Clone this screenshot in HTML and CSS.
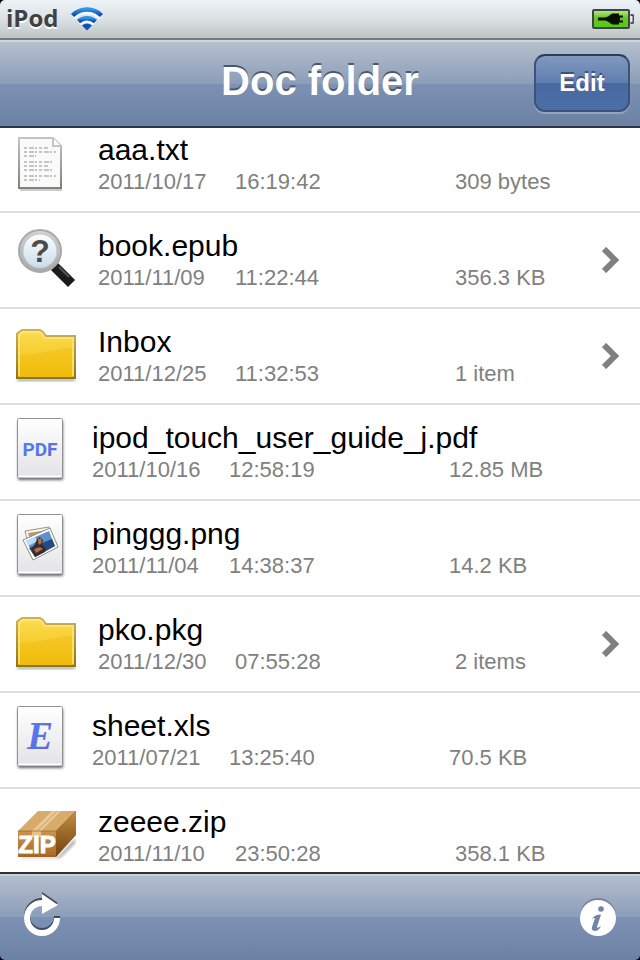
FILE: index.html
```html
<!DOCTYPE html>
<html lang="en">
<head>
<meta charset="utf-8">
<meta name="viewport" content="width=device-width">
<title>Doc folder</title>
<link rel="stylesheet" href="styles.css">
</head>
<body>
<svg class="defs" aria-hidden="true">
  <defs>
    <linearGradient id="paper" x2="0" y2="1"><stop offset="0" stop-color="#fff"/><stop offset="1" stop-color="#e3e3e5"/></linearGradient>
    <linearGradient id="edge" x2="0" y2="1"><stop offset="0" stop-color="#c4c4c2"/><stop offset="1" stop-color="#81807c"/></linearGradient>
    <linearGradient id="gold" x2="0" y2="1"><stop offset="0" stop-color="#fbdc52"/><stop offset="1" stop-color="#f2be0c"/></linearGradient>
    <linearGradient id="goldedge" x2="0" y2="1"><stop offset="0" stop-color="#cdb057"/><stop offset="1" stop-color="#8e761d"/></linearGradient>
    <linearGradient id="ink" x2="1" y2="1"><stop offset="0" stop-color="#4c86f4"/><stop offset="1" stop-color="#6462dc"/></linearGradient>
    <linearGradient id="rim" x2="0" y2="1"><stop offset="0" stop-color="#d2d2d2"/><stop offset="1" stop-color="#aaa9a9"/></linearGradient>
    <linearGradient id="lens" x2="0" y2="1"><stop offset="0" stop-color="#fdfeff"/><stop offset="1" stop-color="#c9dcec"/></linearGradient>
    <linearGradient id="boxfront" x2="0" y2="1"><stop offset="0" stop-color="#cb944e"/><stop offset="1" stop-color="#a96b25"/></linearGradient>
    <linearGradient id="boxside" x2="0" y2="1"><stop offset="0" stop-color="#c38d43"/><stop offset="1" stop-color="#71420f"/></linearGradient>
    <linearGradient id="wave" x2="0" y2="1"><stop offset="0" stop-color="#2d92e8"/><stop offset="1" stop-color="#1146b4"/></linearGradient>
    <linearGradient id="cell" x2="0" y2="1"><stop offset="0" stop-color="#b8ee83"/><stop offset=".45" stop-color="#64c524"/><stop offset="1" stop-color="#55ca14"/></linearGradient>
    <filter id="soft" x="-20%" y="-20%" width="140%" height="140%"><feGaussianBlur stdDeviation="1.6"/></filter>
    <symbol id="page" viewBox="0 0 64 72">
      <rect x="4" y="5" width="45" height="59" rx="1" fill="#000" opacity=".6" filter="url(#soft)"/>
      <rect x="3.500" y="2.500" width="45" height="59" rx="1" fill="url(#paper)" stroke="#929292"/>
      <path d="M4.500 60.500h43" stroke="#fff" stroke-width="2"/>
    </symbol>
    <symbol id="folder" viewBox="0 0 64 72">
      <path d="M3 59h58v2H3z" fill="#000" opacity=".45" filter="url(#soft)"/>
      <path d="M3 58V14l2-2 3-2h18l3 2 3 4h29v42z" fill="url(#gold)" stroke="url(#goldedge)" stroke-width="2"/>
      <path d="M4 57V34c15 3 32-4 56-7v30z" fill="#edb400" opacity=".3"/>
      <path d="M5 56V15l4-3h16l3 2 3 4h28v38" fill="none" stroke="#ffe980" stroke-width="2" opacity=".7"/>
    </symbol>
  </defs>
</svg>

<header class="status">
  <span class="device">iPod</span>
  <svg class="wifi" viewBox="0 0 34 26" role="img" aria-label="Wi-Fi">
    <g fill="none" stroke="#fff" opacity=".8" transform="translate(0 1)"><path d="M3 10a20 20 0 0 1 28 0M9 16a12 12 0 0 1 16 0" stroke-width="6"/></g>
    <g fill="none" stroke="url(#wave)" stroke-width="4.500"><path d="M2.500 9.500a20.500 20.500 0 0 1 29 0"/><path d="M8.500 15.500a12.500 12.500 0 0 1 17 0"/></g>
    <path d="M17 24.500l-5-5q5-4 10 0z" fill="#1151bd"/>
  </svg>
  <svg class="battery" viewBox="0 0 42 21" role="img" aria-label="Battery charging">
    <path d="M38.500 6h1.500q1.500 0 1.500 1.500v5q0 1.500-1.500 1.500h-1.500" fill="#e4e9ea" stroke="#4b5158" stroke-width="2"/>
    <rect x="1" y="1" width="36" height="18" rx="1" fill="url(#cell)" stroke="#3e4549" stroke-width="2"/>
    <path d="M6 8.500h7l3-1 4-3h7v2h4v2h-3v3h3v2h-4v2h-7l-4-3-3-1H6z" fill="#050f03"/>
  </svg>
</header>

<nav class="navbar">
  <h1>Doc folder</h1>
  <button type="button" class="edit">Edit</button>
</nav>

<main class="files">
  <ul>
    <li><a class="row" href="#aaa">
      <svg class="icon" viewBox="0 0 64 72" aria-hidden="true">
        <path d="M6 61h42v2H6z" fill="#ccc"/>
        <path d="M5 10h34l8 8v42H5z" fill="#fafafa" stroke="url(#edge)" stroke-width="2"/>
        <path d="M39 10v8h8" fill="#fff" stroke="#c5c5c5" stroke-width="2"/>
        <path d="M10 20h24M10 24h32M10 28h12M10 34h30M10 38h24M10 42h30M10 48h32M10 52h16" stroke="#c4c4c4" stroke-width="2" stroke-dasharray="3 2 5 1 2 2"/>
      </svg>
      <span class="info"><span class="name">aaa.txt</span><span class="meta"><span class="date">2011/10/17</span><span class="time">16:19:42</span><span class="size">309 bytes</span></span></span>
    </a></li>
    <li><a class="row" href="#book">
      <svg class="icon" viewBox="0 0 64 72" aria-hidden="true">
        <path d="M38 39l6 6" stroke="#aaa" stroke-width="6"/>
        <path d="M44 46l10 10" stroke="#1b1b1b" stroke-width="10" stroke-linecap="square"/>
        <path d="M45 43l10 10" stroke="#555" stroke-width="2"/>
        <circle cx="26" cy="27" r="21" fill="url(#rim)" stroke="#a9a9a9" stroke-width="2"/>
        <circle cx="26" cy="27" r="17" fill="url(#lens)" stroke="#c0c4c8"/>
        <text x="26" y="38" class="question">?</text>
      </svg>
      <span class="info"><span class="name">book.epub</span><span class="meta"><span class="date">2011/11/09</span><span class="time">11:22:44</span><span class="size">356.3 KB</span></span></span>
      <svg class="chevron" viewBox="0 0 18 26" aria-hidden="true"><path d="M2 2l11 11L2 24" /></svg>
    </a></li>
    <li><a class="row" href="#inbox">
      <svg class="icon" aria-hidden="true"><use href="#folder"/></svg>
      <span class="info"><span class="name">Inbox</span><span class="meta"><span class="date">2011/12/25</span><span class="time">11:32:53</span><span class="size">1 item</span></span></span>
      <svg class="chevron" viewBox="0 0 18 26" aria-hidden="true"><path d="M2 2l11 11L2 24" /></svg>
    </a></li>
    <li><a class="row document" href="#guide">
      <svg class="icon" viewBox="0 0 64 72" aria-hidden="true"><use href="#page"/><text x="26" y="40" class="pdf">PDF</text></svg>
      <span class="info"><span class="name">ipod_touch_user_guide_j.pdf</span><span class="meta"><span class="date">2011/10/16</span><span class="time">12:58:19</span><span class="size">12.85 MB</span></span></span>
    </a></li>
    <li><a class="row document" href="#pinggg">
      <svg class="icon" viewBox="0 0 64 72" aria-hidden="true"><use href="#page"/>
        <path d="M11 19l24-4 5 20-24 4z" fill="#faf7ed" stroke="#9b9588"/>
        <path d="M14 21l19-3 3 14-18 3z" fill="#bd9868"/>
        <path d="M9 28l27-12 8 19-25 13z" fill="#fff" stroke="#8a8a8a"/>
        <path d="M12 29l23-10 6 15-20 11z" fill="#5d91cc"/>
        <path d="M15 36l23-9 3 7-20 11z" fill="#244c82"/>
        <path d="M12 29l9-4 3 4-10 5z" fill="#b9dcf5"/>
        <path d="M17 37l4-5 2-5 3-2 3 3-1 4 4 5-1 3-10 5z" fill="#3c2a29"/>
        <path d="M24 27l3-1 1 4-2 3-2-2zM20 37l6-2 3 2-7 4z" fill="#a96d50"/>
      </svg>
      <span class="info"><span class="name">pinggg.png</span><span class="meta"><span class="date">2011/11/04</span><span class="time">14:38:37</span><span class="size">14.2 KB</span></span></span>
    </a></li>
    <li><a class="row" href="#pko">
      <svg class="icon" aria-hidden="true"><use href="#folder"/></svg>
      <span class="info"><span class="name">pko.pkg</span><span class="meta"><span class="date">2011/12/30</span><span class="time">07:55:28</span><span class="size">2 items</span></span></span>
      <svg class="chevron" viewBox="0 0 18 26" aria-hidden="true"><path d="M2 2l11 11L2 24" /></svg>
    </a></li>
    <li><a class="row document" href="#sheet">
      <svg class="icon" viewBox="0 0 64 72" aria-hidden="true"><use href="#page"/><text x="26" y="45" class="letter">E</text></svg>
      <span class="info"><span class="name">sheet.xls</span><span class="meta"><span class="date">2011/07/21</span><span class="time">13:25:40</span><span class="size">70.5 KB</span></span></span>
    </a></li>
    <li><a class="row" href="#zeeee">
      <svg class="icon" viewBox="0 0 64 72" aria-hidden="true">
        <path d="M8 57h36l17-18v4L46 58H8z" fill="#000" opacity=".4" filter="url(#soft)"/>
        <path d="M4 31l20-20h38L42 31z" fill="#d9ab6a"/>
        <path d="M4 31h38v26H4z" fill="url(#boxfront)"/>
        <path d="M42 31l20-20v24L42 57z" fill="url(#boxside)"/>
        <path d="M18 31l20-20h9L27 31v6h-9z" fill="#edd09d" opacity=".8"/>
        <path d="M23 31l20-20" stroke="#c99b5a" stroke-width="1"/>
        <path d="M4 31h38l20-20M4 56h38" fill="none" stroke="#8d5719" opacity=".6"/>
        <text x="23" y="53" class="zip">ZIP</text>
      </svg>
      <span class="info"><span class="name">zeeee.zip</span><span class="meta"><span class="date">2011/11/10</span><span class="time">23:50:28</span><span class="size">358.1 KB</span></span></span>
    </a></li>
  </ul>
</main>

<footer class="toolbar">
  <button type="button" class="tool" aria-label="Refresh">
    <svg viewBox="0 0 40 48" aria-hidden="true">
      <g fill="#3c4a61" transform="translate(0 -2)"><path d="M35 28a15 15 0 1 1-15-15" fill="none" stroke="#3c4a61" stroke-width="6"/><path d="M20 4l16 11-16 9z"/></g>
      <path d="M35 28a15 15 0 1 1-15-15" fill="none" stroke="#fff" stroke-width="6"/><path d="M20 4l16 11-16 9z" fill="#fff"/>
    </svg>
  </button>
  <button type="button" class="tool" aria-label="Information">
    <svg viewBox="0 0 40 48" aria-hidden="true">
      <circle cx="20" cy="26" r="18" fill="#75839c"/>
      <circle cx="20" cy="28" r="18" fill="#fff"/>
      <circle cx="23" cy="19" r="2.800" fill="#7485a3"/>
      <path d="M14 29q3-5 9-4.500l-4 12.500q0 2 4-1-2 5-6.500 5-3.500-.5-2.500-4l3-9q-1-.5-3 1z" fill="#7485a3"/>
    </svg>
  </button>
</footer>
</body>
</html>
```
FILE: styles.css
```css
* { box-sizing: border-box; }

body {
  margin: 0;
  height: 100vh;
  display: flex;
  flex-direction: column;
  background: #000;
  font-family: "Liberation Sans", Arial, sans-serif;
}

svg { display: block; }
.defs { position: absolute; width: 0; height: 0; }
button { font: inherit; cursor: pointer; }

.status {
  flex: none;
  height: 40px;
  padding: 0 6px;
  display: flex;
  align-items: center;
  background: linear-gradient(#edf3f6, #dce2e4 50%, #bdc4c5);
  border-bottom: 2px solid #717a7d;
  border-radius: 5px 5px 0 0;
}
.device {
  padding-bottom: 2px;
  font: 700 24px/36px "Open Sans", sans-serif;
  color: #3f4144;
  text-shadow: 0 2px 0 #fff;
}
.wifi { width: 34px; height: 26px; margin-left: 12px; }
.battery { width: 42px; height: 21px; margin-left: auto; }

.navbar {
  flex: none;
  height: 88px;
  padding: 0 10px 2px;
  display: grid;
  grid-template-columns: 96px 1fr 96px;
  align-items: center;
  background: linear-gradient(#b5c0ce, #8b9db8 50%, #7c91b3 50%, #6c82a4);
  border-top: 2px solid #ced6de;
  border-bottom: 2px solid #2c3645;
}
h1 {
  grid-column: 2;
  margin: 0;
  padding-bottom: 4px;
  text-align: center;
  font-size: 40px;
  line-height: 48px;
  color: #fff;
  text-shadow: 0 -2px 0 #4b586c;
}
.edit {
  height: 58px;
  padding: 0;
  border: 2px solid #3b5379;
  border-top-color: #2c3c57;
  border-radius: 11px;
  background: linear-gradient(#8299c0, #5e7daf 50%, #48699f 50%, #4a6fa8);
  box-shadow: 0 2px 0 #94a4bd;
  color: #fff;
  font-size: 24px;
  font-weight: bold;
  text-shadow: 0 -2px 0 #3e5275;
}

.files { flex: 1; min-height: 0; overflow: hidden; background: #fff; }
ul { margin: -11px 0 0; padding: 0; list-style: none; }
.row {
  height: 96px;
  padding: 0 20px 0 14px;
  display: flex;
  align-items: center;
  gap: 20px;
  border-bottom: 2px solid #ddd;
  color: #000;
  text-decoration: none;
}
.document { gap: 14px; }
.icon { flex: none; width: 64px; height: 72px; }
.info { flex: 1; }
.name { display: block; font-size: 30px; line-height: 36px; }
.meta { display: flex; font-size: 22px; line-height: 28px; color: #808080; }
.date { width: 137px; }
.time { width: 220px; }
.size { white-space: nowrap; }
.chevron { flex: none; width: 18px; height: 26px; fill: none; stroke: #808080; stroke-width: 6px; }

.question { font: bold 32px "Liberation Sans", sans-serif; text-anchor: middle; fill: #4c4c4c; }
.pdf { font: bold 19px Roboto, sans-serif; text-anchor: middle; fill: url(#ink); }
.letter { font: italic bold 39px "Liberation Serif", serif; text-anchor: middle; fill: url(#ink); }
.zip { font: bold 24px "Liberation Sans", sans-serif; text-anchor: middle; fill: #fff; stroke: #fff; stroke-width: 1px; }

.toolbar {
  flex: none;
  height: 88px;
  padding: 0 22px 6px;
  display: flex;
  align-items: center;
  justify-content: space-between;
  background: linear-gradient(#b5c0ce, #8b9db8 50%, #7c91b3 50%, #6c82a4);
  border-top: 2px solid #2d3337;
  border-radius: 0 0 5px 5px;
  box-shadow: inset 0 2px 0 #c6cfda;
}
.tool { padding: 0; border: 0; background: none; }
.tool svg { width: 40px; height: 48px; }
```
